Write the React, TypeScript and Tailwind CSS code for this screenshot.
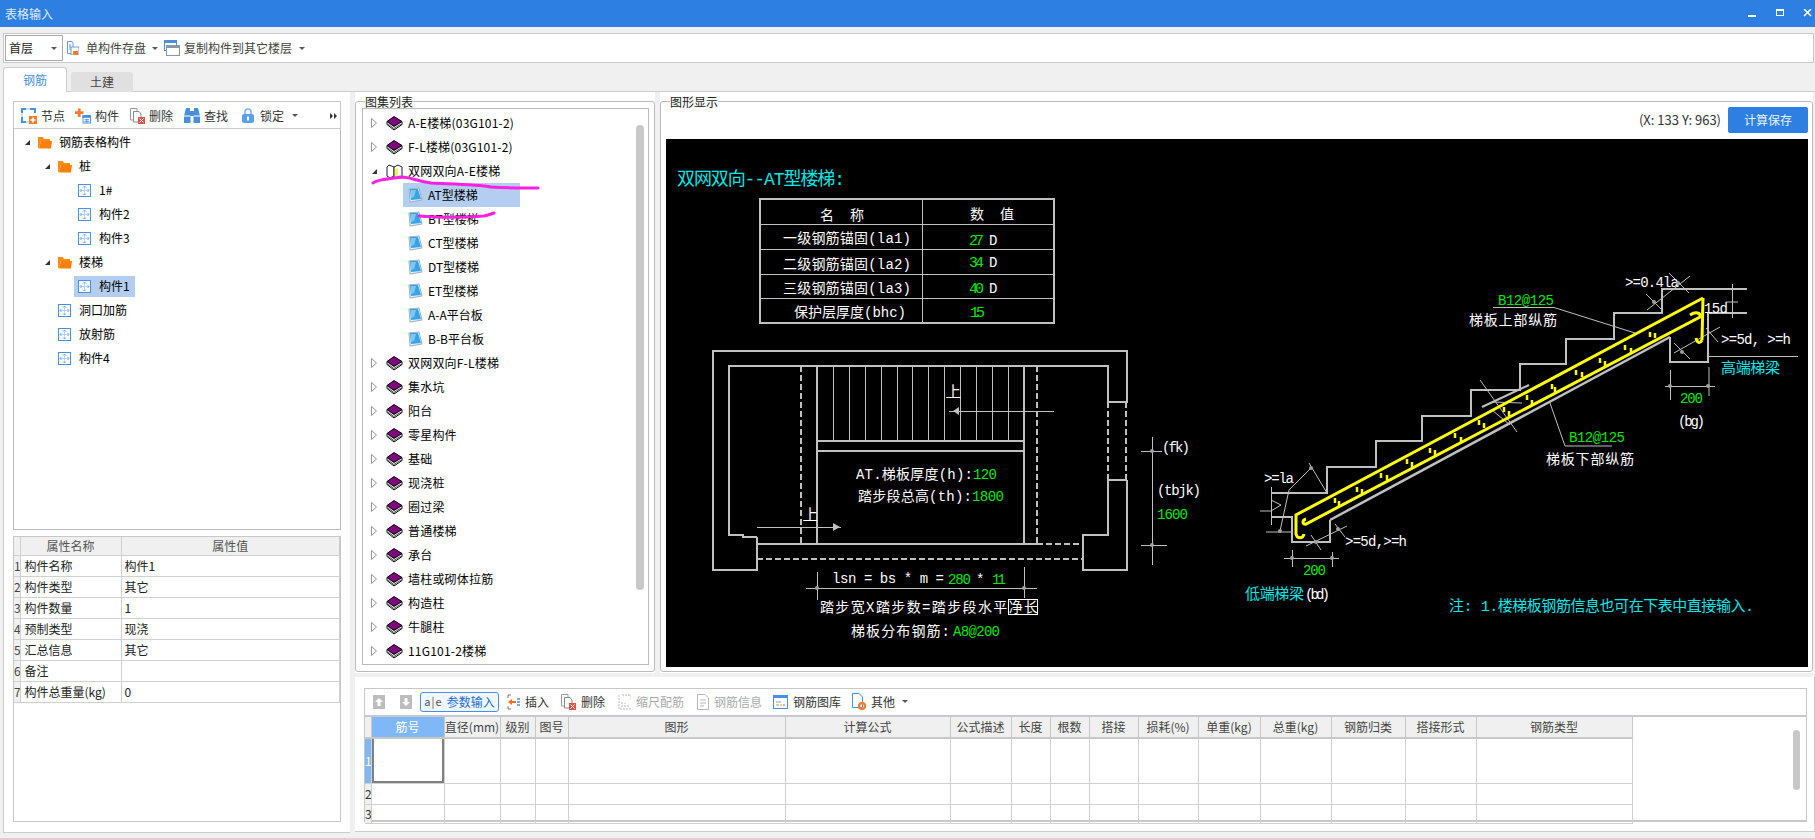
import { type ReactNode } from "react";

const GRAY = "#c0c0c0";

function Caret() {
    return <span className="w-0 h-0 border-x-[3px] border-x-transparent border-t-[3px] border-t-[#555]" />;
}

function BookIcon() {
    return (
        <svg width="17" height="15" viewBox="0 0 17 15" className="shrink-0">
            <path d="M8 0.5 L16 5.5 L8 10.5 L1 5.5 Z" fill="#800080" stroke="#000" />
            <path d="M1 5.5 L1 8.5 L8 14 L16 8.5 L16 5.5 L8 10.5 Z" fill="#fff" stroke="#000" />
            <path d="M2 8 L8 12.5 L15 8" fill="none" stroke="#555" />
        </svg>
    );
}

function OpenBookIcon() {
    return (
        <svg width="17" height="15" viewBox="0 0 17 15" className="shrink-0">
            <path d="M8 3 L3 1 L1 3 L1 12 L4 14 L8 12 Z" fill="#fff" stroke="#222" />
            <path d="M8 3 L12 1 L16 3 L16 14 L8 14 Z" fill="#fff" stroke="#222" />
            <path d="M9 5 L12 4 L12 12 L9 13 Z" fill="#f8f060" />
        </svg>
    );
}

function PageIcon() {
    return (
        <svg width="15" height="16" viewBox="0 0 15 16" className="shrink-0">
            <path d="M1 2 L11 1 L14 13 L2 15 Z" fill="#e4eef4" stroke="#9ab0bc" />
            <path d="M2 2 L10 2 L13 12 L3 13 Z" fill="#38a4e8" />
            <path d="M3 3 L8 3 L6 10 L3 11 Z" fill="#7cc8f4" />
        </svg>
    );
}

function NodeIcon() {
    return (
        <svg width="13" height="13" viewBox="0 0 13 13" className="shrink-0">
            <rect x="0.5" y="0.5" width="12" height="12" fill="#fff" stroke="#4a90e2" />
            <path d="M6.5 2 V11 M2 6.5 H11" fill="none" stroke="#b4d2f4" />
            <path d="M5 3.5 L6.5 2 L8 3.5 M5 9.5 L6.5 11 L8 9.5 M3.5 5 L2 6.5 L3.5 8 M9.5 5 L11 6.5 L9.5 8" fill="none" stroke="#6aa4e8" />
        </svg>
    );
}

function FolderIcon() {
    return (
        <svg width="14" height="13" viewBox="0 0 14 13" className="shrink-0">
            <path d="M0 1 H5 L6 3 H12 V5 H3 L1 12 H0 Z" fill="#ff8c1a" />
            <path d="M3 5 H14 L13 12.5 H1 Z" fill="#ff8000" />
        </svg>
    );
}

function Expanded() {
    return <span className="w-0 h-0 border-l-[5px] border-l-transparent border-b-[5px] border-b-[#333] shrink-0" />;
}

function Collapsed() {
    return (
        <svg width="6" height="10" viewBox="0 0 6 10" className="shrink-0">
            <path d="M0.5 0.5 L5.5 5 L0.5 9.5 Z" fill="#fff" stroke="#999" />
        </svg>
    );
}

function LeftIcon({ kind }: { kind: string }) {
    if (kind === "node")
        return (
            <svg width="16" height="16" viewBox="0 0 16 16">
                <path d="M1 5 V1 H5 M9 1 H14 V5 M1 9 V14 H5" fill="none" stroke="#4a90e2" strokeWidth="2" />
                <path d="M5 1 H9 M1 5 V9 M5 14 H8" stroke="#9cc4f0" />
                <rect x="8" y="8" width="8" height="8" fill="#f08030" />
                <path d="M12 9.5 V14.5 M9.5 12 H14.5" stroke="#fff" strokeWidth="1.5" />
            </svg>
        );
    if (kind === "part")
        return (
            <svg width="17" height="16" viewBox="0 0 17 16">
                <path d="M3 0 H6 V3 H9 V6 H6 V9 H3 V6 H0 V3 H3 Z" fill="#f08030" />
                <rect x="8.5" y="7.5" width="8" height="8" fill="#fff" stroke="#4a90e2" />
                <rect x="8" y="7" width="9" height="3" fill="#4a90e2" />
                <path d="M10 12 H15 M10 14 H15 M12.5 11 V15" stroke="#4a90e2" />
            </svg>
        );
    if (kind === "delete")
        return (
            <svg width="15" height="16" viewBox="0 0 15 16">
                <path d="M0.5 0.5 H7 V12 H0.5 Z" fill="#fff" stroke="#999" />
                <path d="M3.5 3.5 H9 L11 6 V14 H3.5 Z" fill="#fff" stroke="#888" />
                <rect x="8" y="9" width="7" height="7" fill="#d9534f" />
                <path d="M9.5 10.5 L13.5 14.5 M13.5 10.5 L9.5 14.5" stroke="#fff" />
            </svg>
        );
    if (kind === "find")
        return (
            <svg width="16" height="15" viewBox="0 0 16 15">
                <path d="M2 0 H6 V3 H10 V0 H14 L16 8 V15 H9.5 V8 H6.5 V15 H0 V8 Z" fill="#4a90d9" />
                <path d="M0 8 H6.5 M9.5 8 H16" stroke="#fff" />
            </svg>
        );
    return (
        <svg width="12" height="15" viewBox="0 0 12 15">
            <path d="M3 6 V4 A3 3 0 0 1 9 4 V6" fill="none" stroke="#7ab0ea" strokeWidth="1.5" />
            <rect x="0" y="6" width="12" height="9" rx="2" fill="#5a9ee8" />
            <rect x="5" y="8.5" width="2" height="4" fill="#fff" />
        </svg>
    );
}

function SaveIcon() {
    return (
        <svg width="12" height="14" viewBox="0 0 12 14">
            <path d="M0.5 0.5 H5 L6 2 V12.5 H0.5 Z" fill="#fff" stroke="#6a9bd8" />
            <path d="M2 4 H4 M2 6 H4 M2 8 H4" stroke="#6a9bd8" />
            <rect x="4" y="6" width="8" height="8" fill="#fff" stroke="#6a9bd8" />
            <rect x="6" y="10" width="5" height="4" fill="#f08030" />
        </svg>
    );
}

function CopyIcon() {
    return (
        <svg width="16" height="16" viewBox="0 0 16 16">
            <rect x="0.5" y="0.5" width="12" height="10" fill="#fff" stroke="#4a90e2" />
            <rect x="0" y="0" width="13" height="3" fill="#4a90e2" />
            <rect x="2.5" y="5.5" width="13" height="10" fill="#fff" stroke="#8a96a4" />
            <rect x="2" y="5" width="14" height="3" fill="#8a96a4" />
        </svg>
    );
}

function ToolIcon({ kind }: { kind: string }) {
    switch (kind) {
        case "up":
        case "down":
            return (
                <svg width="12" height="14" viewBox="0 0 12 14">
                    <rect width="12" height="14" fill="#bdbdbd" />
                    <path d={kind === "up" ? "M6 3 L10 7 H7.5 V11 H4.5 V7 H2 Z" : "M6 11 L10 7 H7.5 V3 H4.5 V7 H2 Z"} fill="#fff" />
                </svg>
            );
        case "insert":
            return (
                <svg width="13" height="16" viewBox="0 0 13 16">
                    <path d="M4 1 H1 V4 M4 15 H1 V12" fill="none" stroke="#777" />
                    <path d="M1 8 L5 5 V7 H9 V9 H5 V11 Z" fill="#f07020" />
                    <path d="M10 5 H13 M10 8 H13 M10 11 H13" stroke="#4a90e2" strokeWidth="1.5" />
                </svg>
            );
        case "scale":
            return (
                <svg width="13" height="16" viewBox="0 0 13 16">
                    <path d="M1 1 V15 H13 M4 1 H13 M13 1 V5 M4 13 V7 M7 13 V9 M10 13 V11" fill="none" stroke="#b8b8b8" strokeDasharray="2 1" />
                </svg>
            );
        case "info":
            return (
                <svg width="12" height="16" viewBox="0 0 12 16">
                    <path d="M0.5 0.5 H8 L11.5 4 V15.5 H0.5 Z" fill="#fff" stroke="#b8b8b8" />
                    <path d="M3 6 H9 M3 9 H9 M3 12 H7" stroke="#b8b8b8" />
                </svg>
            );
        case "library":
            return (
                <svg width="15" height="14" viewBox="0 0 15 14">
                    <rect x="0.5" y="0.5" width="14" height="13" fill="#fff" stroke="#4a90e2" />
                    <rect width="15" height="3" fill="#4a90e2" />
                    <path d="M3 7 H8 M3 10 H6" stroke="#999" />
                    <path d="M7 10 H9" stroke="#f0a020" />
                    <path d="M10 10 H12" stroke="#d9534f" />
                </svg>
            );
        case "other":
            return (
                <svg width="14" height="17" viewBox="0 0 14 17">
                    <path d="M0.5 0.5 H7 L10.5 4 V14.5 H0.5 Z" fill="#fff" stroke="#4a90e2" />
                    <circle cx="10" cy="13" r="3" fill="none" stroke="#f08030" strokeWidth="2.5" />
                </svg>
            );
        default:
            return <LeftIcon kind="delete" />;
    }
}

function TreeRow({ children, indent }: { children: ReactNode; indent: number }) {
    return (
        <div className="h-6 flex items-center" style={{ paddingLeft: indent }}>
            {children}
        </div>
    );
}

function ComponentTree() {
    return (
        <div className="h-[402px] border border-[#bbb] border-t-[#ccc] pt-[1px] text-[12px] text-black">
            <TreeRow indent={11}>
                <Expanded />
                <span className="ml-[8px] flex items-center gap-[7px]">
                    <FolderIcon /> 钢筋表格构件
                </span>
            </TreeRow>
            <TreeRow indent={31}>
                <Expanded />
                <span className="ml-[8px] flex items-center gap-[7px]">
                    <FolderIcon /> 桩
                </span>
            </TreeRow>
            {["1#", "构件2", "构件3"].map((n) => (
                <TreeRow key={n} indent={64}>
                    <NodeIcon />
                    <span className="ml-[8px]">{n}</span>
                </TreeRow>
            ))}
            <TreeRow indent={31}>
                <Expanded />
                <span className="ml-[8px] flex items-center gap-[7px]">
                    <FolderIcon /> 楼梯
                </span>
            </TreeRow>
            <TreeRow indent={60}>
                <div className="h-[21px] w-[61px] pl-[4px] flex items-center bg-[#b3cef0]">
                    <NodeIcon />
                    <span className="ml-[8px]">构件1</span>
                </div>
            </TreeRow>
            {["洞口加筋", "放射筋", "构件4"].map((n) => (
                <TreeRow key={n} indent={44}>
                    <NodeIcon />
                    <span className="ml-[8px]">{n}</span>
                </TreeRow>
            ))}
        </div>
    );
}

const props = [
    ["构件名称", "构件1"],
    ["构件类型", "其它"],
    ["构件数量", "1"],
    ["预制类型", "现浇"],
    ["汇总信息", "其它"],
    ["备注", ""],
    ["构件总重量(kg)", "0"],
];

function PropsTable() {
    return (
        <div className="mt-[6px] h-[286px] border border-[#c8c8c8] bg-white text-[12px]">
            <table className="w-[326px] table-fixed border-collapse">
                <colgroup>
                    <col className="w-[6px]" />
                    <col className="w-[101px]" />
                    <col />
                </colgroup>
                <thead>
                    <tr className="h-[17px] bg-[#f0f0f0] text-[#555]">
                        <th className="border border-[#d0d0d0] border-t-0 border-l-0 font-normal" />
                        <th className="border border-[#d0d0d0] border-t-0 font-normal">属性名称</th>
                        <th className="border border-[#d0d0d0] border-t-0 border-r-[#c8c8c8] font-normal">属性值</th>
                    </tr>
                </thead>
                <tbody>
                    {props.map(([k, v], i) => (
                        <tr key={k} className="h-[21px] text-[#222]">
                            <td className="border border-[#d0d0d0] border-l-0 bg-[#f0f0f0] text-[#444] overflow-hidden">{i + 1}</td>
                            <td className="border border-[#d0d0d0] pl-[4px] whitespace-nowrap">{k}</td>
                            <td className="border border-[#d0d0d0] pl-[3px]">{v}</td>
                        </tr>
                    ))}
                </tbody>
            </table>
        </div>
    );
}

function LeftPanel() {
    const tools = [
        ["node", "节点", "ml-[7px]"],
        ["part", "构件", "ml-[10px]"],
        ["delete", "删除", "ml-[10px]"],
        ["find", "查找", "ml-[11px]"],
        ["lock", "锁定", "ml-[12px]"],
    ];
    return (
        <div className="w-[347px] shrink-0 bg-white border-l border-[#ccc] pl-[9px] pr-[9px] pt-[9px] border-b">
            <div className="h-[27px] pt-[1px] border border-b-0 border-[#c8c8c8] flex items-center text-[12px] text-[#333]">
                {tools.map(([k, t, m]) => (
                    <div key={t} className={`${m} flex items-center gap-[4px]`}>
                        <span className="w-[16px] flex justify-center">
                            <LeftIcon kind={k} />
                        </span>
                        {t}
                    </div>
                ))}
                <span className="ml-[8px] flex">
                    <Caret />
                </span>
                <svg width="7" height="6" viewBox="0 0 7 6" className="ml-auto mr-[3px]">
                    <path d="M0 0 L3 3 L0 6 Z M4 0 L7 3 L4 6 Z" fill="#333" />
                </svg>
            </div>
            <ComponentTree />
            <PropsTable />
        </div>
    );
}

const atlas: { name: string; open?: boolean; child?: boolean; sel?: boolean }[] = [
    { name: "A-E楼梯(03G101-2)" },
    { name: "F-L楼梯(03G101-2)" },
    { name: "双网双向A-E楼梯", open: true },
    { name: "AT型楼梯", child: true, sel: true },
    { name: "BT型楼梯", child: true },
    { name: "CT型楼梯", child: true },
    { name: "DT型楼梯", child: true },
    { name: "ET型楼梯", child: true },
    { name: "A-A平台板", child: true },
    { name: "B-B平台板", child: true },
    { name: "双网双向F-L楼梯" },
    { name: "集水坑" },
    { name: "阳台" },
    { name: "零星构件" },
    { name: "基础" },
    { name: "现浇桩" },
    { name: "圈过梁" },
    { name: "普通楼梯" },
    { name: "承台" },
    { name: "墙柱或砌体拉筋" },
    { name: "构造柱" },
    { name: "牛腿柱" },
    { name: "11G101-2楼梯" },
];

function AtlasTree() {
    return (
        <div className="relative h-[557px] border border-[#bbb] pt-[2px] text-[12px] text-black">
            {atlas.map((a) =>
                a.child ? (
                    <div key={a.name} className="h-6 pl-[40px] flex items-center">
                        <div className={`h-6 w-[117px] flex items-center pl-[5px] ${a.sel ? "bg-[#b3cef0]" : ""}`}>
                            <PageIcon />
                            <span className="ml-[5px]">{a.name}</span>
                        </div>
                    </div>
                ) : (
                    <div key={a.name} className="h-6 pl-[8px] flex items-center">
                        <span className="w-[6px] flex justify-center">{a.open ? <Expanded /> : <Collapsed />}</span>
                        <span className="ml-[9px]">{a.open ? <OpenBookIcon /> : <BookIcon />}</span>
                        <span className="ml-[5px] tracking-[0.2px]">{a.name}</span>
                    </div>
                ),
            )}
            <div className="absolute left-[273px] top-[16px] w-[8px] h-[465px] rounded-[4px] bg-[#c8c8c8]" />
            {/* marker strokes drawn over the tree */}
            <svg className="absolute left-[-362px] top-[-108px] pointer-events-none" width="700" height="300" viewBox="0 0 700 300">
                <path d="M372 182 C376 178 390 178 400 176 C410 176 415 180 430 182 C450 183 475 183 490 186 C505 187 520 187 537 187" fill="none" stroke="#ff20e0" strokeWidth="3" strokeLinecap="round" />
                <path d="M418 215 C440 217 470 216 483 215 C488 214 490 213 493 212" fill="none" stroke="#ff20e0" strokeWidth="3" strokeLinecap="round" />
            </svg>
        </div>
    );
}

function Group({ title, className, children }: { title: string; className: string; children: ReactNode }) {
    return (
        <div className={`${className} bg-white pt-[9px]`}>
            <div className="relative h-[571px] border border-[#bbb] rounded-[3px]">
                <span className="absolute left-[9px] top-[-9px] bg-white text-[12px] leading-[17px] text-[#222]">{title}</span>
                {children}
            </div>
        </div>
    );
}

function T({ x, y, w, s = 14, c = "#fff", children }: { x: number; y: number; w?: number; s?: number; c?: string; children: string }) {
    return (
        <text x={x} y={y} fontSize={s} fill={c} textLength={w} lengthAdjust={w ? "spacing" : undefined}>
            {children}
        </text>
    );
}

const G = "#00e800";
const C = "#00e8e8";
const Y = "#ffff00";

const treads = [833, 849, 865, 881, 897, 912, 928, 944, 960, 976, 992, 1008];
const upperTicks = [[1335, 498], [1357, 487], [1381, 473], [1407, 459], [1430, 448], [1455, 433], [1479, 420], [1504, 407], [1527, 395], [1552, 384], [1576, 370], [1600, 358], [1625, 345], [1650, 332]];
const lowerTicks = [[1339, 506], [1362, 494], [1387, 480], [1412, 467], [1435, 455], [1461, 442], [1484, 428], [1509, 416], [1532, 405], [1555, 392], [1582, 377], [1605, 366], [1631, 353], [1655, 338]];
const dots = [[1152, 451], [1152, 545], [817, 588], [1024, 588], [1654, 302], [1678, 283], [1682, 352], [1670, 386], [1708, 386], [1311, 468], [1280, 531], [1316, 542], [1338, 529], [1292, 558], [1332, 558]];

function Plan() {
    return (
        <>
            <g fill="none" stroke={GRAY} strokeWidth="2" shapeRendering="crispEdges">
                <path d="M757 537 V570 H713 V351 H1127 V402 H1108 V366 H729 V535 H743 V537 H757" />
                <path d="M1127 480 H1108 V535 H1083 V570 H1127 V480" />
                <path d="M817 366 V544 M1024 366 V544 M757 544 H1037 M817 441 H1024 M817 451 H1024" />
                <path d="M801 366 V544 M1037 366 V544 M1037 544 H1083 M757 559 H1083 M1108 402 V480 M1126 402 V480" strokeDasharray="6 3" />
            </g>
            <g stroke={GRAY} shapeRendering="crispEdges" fill="none">
                {treads.map((x) => (
                    <path key={x} d={`M${x + 0.5} 366 V441`} />
                ))}
                <path d="M949 411.5 H1054 M757 527.5 H841 M946 397.5 H960 M803 520.5 H817" />
                <path d="M1152.5 437 V565 M1141 451.5 H1162 M1141 545.5 H1167 M806 588.5 H1037 M817.5 572 V600 M1024.5 567 V598" />
            </g>
            <path d="M953 411 L959 407 V415 Z M840 527 L833 523 V531 Z" fill={GRAY} />
            <g>
                <T x={946} y={397} s={15}>上</T>
                <T x={803} y={520} s={15}>上</T>
                <T x={856} y={479} w={117}>AT.梯板厚度(h):</T>
                <T x={973} y={479} w={24} c={G}>120</T>
                <T x={858} y={501} w={114}>踏步段总高(th):</T>
                <T x={972} y={501} w={32} c={G}>1800</T>
                <T x={1162} y={452} w={28}>(fk)</T>
                <T x={1157} y={495} w={44}>(tbjk)</T>
                <T x={1157} y={519} w={31} c={G}>1600</T>
                <T x={832} y={583} w={112}>lsn = bs * m =</T>
                <T x={948} y={584} w={23} c={G}>280</T>
                <T x={976} y={584} w={8}>*</T>
                <T x={992} y={584} w={14} c={G}>11</T>
                <T x={820} y={612} w={218}>踏步宽X踏步数=踏步段水平净长</T>
                <rect x={1008.5} y={599.5} width={29} height={15} fill="none" stroke="#fff" shapeRendering="crispEdges" />
                <T x={851} y={636} w={99}>梯板分布钢筋:</T>
                <T x={953} y={636} w={47} c={G}>A8@200</T>
            </g>
        </>
    );
}

function Section() {
    return (
        <>
            <g fill="none" stroke={GRAY} strokeWidth="2" shapeRendering="crispEdges">
                <path d="M1271 493 H1327 V467 H1376 V441 H1422 V416 H1471 V390 H1520 V364 H1566 V339 H1614 V313 H1662 V289 H1747" />
                <path d="M1708 313 H1747 M1708 313 V362 H1670 V337 M1330 520 V542 H1292 V517 H1271" />
            </g>
            <path d="M1670 337 L1330 520" stroke={GRAY} strokeWidth="2.5" fill="none" />
            <g fill="none" stroke={GRAY} strokeWidth="1">
                <path d="M1708 356.5 H1798 M1670.5 370 V400 M1709 367 V396 M1665 386.5 H1715" />
                <path d="M1493 307.5 H1554 L1635 333 M1550 403 L1565 446 H1612" />
                <path d="M1647 310 L1690 276 M1646 294 L1662 310 M1669 273 L1689 293 M1732.5 284 V318 M1726 302 H1738" />
                <path d="M1720 327 L1674 353 M1706 328 L1718 342 M1674 343 L1690 359" />
                <path d="M1271.5 487 V525 M1260 511 H1271 M1271 500 L1281 505 L1271 511" />
                <path d="M1311 468 L1289 490 L1280 531 M1309 463 L1327 493 M1266 532 H1291" />
                <path d="M1306 546 L1347 526 M1311 535 L1321 550 M1335 524 L1345 537" />
                <path d="M1284 558.5 H1339 M1292.5 550 V567 M1332.5 552 V567" />
                <path d="M1480 380 L1517 432 M1492 402 L1522 403 M1492 410 L1510 425" />
            </g>
            <path d="M1482 407 L1529 385" stroke={GRAY} strokeWidth="2" fill="none" />
            <g fill="none" stroke={Y} strokeWidth="3">
                <path d="M1702 340 C1700 344 1697 343 1696 338 M1703 298 L1702 340" />
                <path d="M1703 298 L1296 515 L1296 534 C1297 539 1303 539 1304 534" />
                <path d="M1690 315 C1696 311 1701 313 1700 317 L1306 524 C1302 525 1302 520 1306 519" />
            </g>
            <g fill="none" stroke={Y} strokeWidth="2.5">
                {upperTicks.map(([x, y]) => (
                    <path key={x} d={`M${x} ${y} V${y + 5}`} />
                ))}
                {lowerTicks.map(([x, y]) => (
                    <path key={x} d={`M${x} ${y - 5} V${y}`} />
                ))}
            </g>
            <T x={1498} y={305} w={56} c={G}>B12@125</T>
            <T x={1469} y={325} w={88}>梯板上部纵筋</T>
            <T x={1625} y={287} w={54}>&gt;=0.4la</T>
            <T x={1704} y={313} w={24}>15d</T>
            <T x={1721} y={344} w={70}>&gt;=5d, &gt;=h</T>
            <T x={1721} y={373} w={59} s={15} c={C}>高端梯梁</T>
            <T x={1680} y={403} w={23} c={G}>200</T>
            <T x={1678} y={426} w={27}>(bg)</T>
            <T x={1569} y={442} w={56} c={G}>B12@125</T>
            <T x={1546} y={464} w={88}>梯板下部纵筋</T>
            <T x={1264} y={483} w={30}>&gt;=la</T>
            <T x={1345} y={546} w={62}>&gt;=5d,&gt;=h</T>
            <T x={1303} y={575} w={23} c={G}>200</T>
            <T x={1245} y={599} w={59} s={15} c={C}>低端梯梁</T>
            <T x={1305} y={599} w={25}>(bd)</T>
            <T x={1449} y={611} w={305} s={15} c={C}>注: 1.楼梯板钢筋信息也可在下表中直接输入.</T>
        </>
    );
}

function Drawing() {
    return (
        <svg width="1142" height="528" viewBox="666 139 1142 528" className="block bg-black font-['Liberation_Mono','Noto_Sans_CJK_SC',monospace]">
            <T x={677} y={185} w={168} s={18} c={C}>双网双向--AT型楼梯:</T>
            <g shapeRendering="crispEdges" fill="none" stroke={GRAY}>
                <rect x={760} y={199} width={294} height={124} strokeWidth="2" />
                <path d="M922 199 V323 M760 224.5 H1054 M760 249.5 H1054 M760 274.5 H1054 M760 298.5 H1054" />
            </g>
            <T x={820} y={220} w={44}>名 称</T>
            <T x={970} y={219} w={44}>数 值</T>
            <T x={783} y={243} w={128}>一级钢筋锚固(la1)</T>
            <T x={783} y={269} w={128}>二级钢筋锚固(la2)</T>
            <T x={783} y={293} w={128}>三级钢筋锚固(la3)</T>
            <T x={794} y={317} w={112}>保护层厚度(bhc)</T>
            <T x={969} y={245} w={15} s={15} c={G}>27</T>
            <T x={969} y={267} w={15} s={15} c={G}>34</T>
            <T x={969} y={293} w={15} s={15} c={G}>40</T>
            <T x={970} y={317} w={15} s={15} c={G}>15</T>
            <T x={989} y={245}>D</T>
            <T x={989} y={267}>D</T>
            <T x={989} y={293}>D</T>
            <Plan />
            <Section />
            {dots.map(([x, y]) => (
                <circle key={`${x}-${y}`} cx={x} cy={y} r="2" fill="#a0a0a0" />
            ))}
        </svg>
    );
}

const columns = [
    ["筋号", 73],
    ["直径(mm)", 56],
    ["级别", 35],
    ["图号", 33],
    ["图形", 217],
    ["计算公式", 165],
    ["公式描述", 61],
    ["长度", 39],
    ["根数", 39],
    ["搭接", 49],
    ["损耗(%)", 60],
    ["单重(kg)", 62],
    ["总重(kg)", 71],
    ["钢筋归类", 74],
    ["搭接形式", 71],
    ["钢筋类型", 156],
] as const;

function BarGrid() {
    return (
        <table className="w-[1267px] table-fixed border-collapse text-[12px]">
            <colgroup>
                <col style={{ width: 6 }} />
                {columns.map(([n, w]) => (
                    <col key={n} style={{ width: w }} />
                ))}
            </colgroup>
            <thead>
                <tr className="h-[21px] bg-[#f0f0f0] text-[#444]">
                    <th className="border-r border-b-2 border-[#c8c8c8] font-normal" />
                    {columns.map(([n], i) => (
                        <th
                            key={n}
                            className={`border-r border-b-2 border-[#c8c8c8] font-normal whitespace-nowrap overflow-hidden ${i === 0 ? "bg-[#7fb8f8] text-white" : ""}`}>
                            {n}
                        </th>
                    ))}
                </tr>
            </thead>
            <tbody>
                {[45, 21, 18].map((h, r) => (
                    <tr key={r} style={{ height: h }} className="text-[#333]">
                        <td className={`border-b border-r border-[#d0d0d0] overflow-hidden ${r === 0 ? "bg-[#7fb8f8] text-white" : "bg-[#f0f0f0]"}`}>
                            {r + 1}
                        </td>
                        {columns.map(([n], i) => (
                            <td
                                key={n}
                                className={`border-b border-r border-[#d0d0d0] ${r === 0 && i === 0 ? "shadow-[inset_2px_0_0_#808080,inset_-2px_0_0_#808080,inset_0_-2px_0_#808080]" : ""}`}
                            />
                        ))}
                    </tr>
                ))}
            </tbody>
        </table>
    );
}

function BottomPanel() {
    const tools: [string, string, string, string][] = [
        ["insert", "插入", "ml-[8px]", "text-[#333]"],
        ["delete", "删除", "ml-[12px]", "text-[#333]"],
        ["scale", "缩尺配筋", "ml-[13px]", "text-[#aaa]"],
        ["info", "钢筋信息", "ml-[13px]", "text-[#aaa]"],
        ["library", "钢筋图库", "ml-[11px]", "text-[#333]"],
        ["other", "其他", "ml-[11px]", "text-[#333]"],
    ];
    return (
        <div className="ml-[5px] mt-[4px] h-[155px] bg-white border-b border-r border-[#ccc] pt-[11px] pl-[9px] pr-[7px]">
            <div className="relative h-[134px] border border-[#c8c8c8] border-b-2">
                <div className="h-[28px] pb-[1px] border-b-2 border-[#c8c8d0] flex items-center text-[12px]">
                    <span className="ml-[2px] w-[24px] flex justify-center">
                        <ToolIcon kind="up" />
                    </span>
                    <span className="ml-[3px] w-[24px] flex justify-center">
                        <ToolIcon kind="down" />
                    </span>
                    <div className="ml-[2px] w-[79px] h-[20px] border border-[#4a90e2] rounded-[3px] bg-[#f0f7ff] flex items-center justify-center gap-[4px] text-[#1c6fd0]">
                        <span className="text-[#555] text-[11px] tracking-[1px]">a|e</span>
                        参数输入
                    </div>
                    {tools.map(([k, t, m, c]) => (
                        <div key={t} className={`${m} ${c} flex items-center gap-[5px]`}>
                            <ToolIcon kind={k} />
                            {t}
                        </div>
                    ))}
                    <span className="ml-[7px] flex">
                        <Caret />
                    </span>
                </div>
                <BarGrid />
                <div className="absolute left-[1428px] top-[41px] w-[7px] h-[60px] rounded-[4px] bg-[#c8c8c8]" />
            </div>
        </div>
    );
}

export default function App() {
    return (
        <div className="w-[1815px] h-[839px] overflow-hidden bg-[#f0f0f0] border-b border-[#d0d4e4] font-['Noto_Sans_CJK_SC',sans-serif]">
            <header className="h-[27px] bg-[#2d7fe2] flex items-center pl-[5px] pr-[3px] text-white/85 text-[12px]">
                <span>表格输入</span>
                <svg width="64" height="10" viewBox="0 0 64 10" className="ml-auto">
                    <rect x="0" y="6" width="8" height="2" fill="#fff" />
                    <rect x="28.5" y="0.5" width="7" height="6" fill="none" stroke="#fff" />
                    <rect x="28" y="0" width="8" height="2" fill="#fff" />
                    <path d="M56 0 L63 7 M63 0 L56 7" stroke="#fff" strokeWidth="1.6" />
                </svg>
            </header>
            <div className="mt-[6px] ml-[3px] mr-[1px] h-[30px] bg-white border border-[#c8c8c8] flex items-center text-[12px] text-[#444]">
                <div className="ml-[1px] w-[58px] h-[26px] border border-[#aaa] flex items-center justify-between pl-[3px] pr-[5px] text-[#222]">
                    首层
                    <Caret />
                </div>
                <span className="ml-[4px]">
                    <SaveIcon />
                </span>
                <span className="ml-[7px]">单构件存盘</span>
                <span className="ml-[6px] flex">
                    <Caret />
                </span>
                <span className="ml-[6px] flex">
                    <CopyIcon />
                </span>
                <span className="ml-[4px]">复制构件到其它楼层</span>
                <span className="ml-[7px] flex">
                    <Caret />
                </span>
            </div>
            <div className="mt-[4px] ml-[3px] h-[25px] flex items-end text-[12px] relative z-10">
                <div className="w-[64px] h-[25px] bg-white border border-b-0 border-[#ccc] rounded-t-[3px] flex items-center justify-center text-[#4a90e2]">
                    钢筋
                </div>
                <div className="ml-[4px] w-[62px] h-[20px] bg-[#e0e0e0] rounded-t-[3px] flex items-center justify-center text-[#444]">
                    土建
                </div>
            </div>
            <main className="h-[742px] ml-[3px] border-t border-[#ccc] flex -mt-[1px]">
                <LeftPanel />
                <div className="flex-1 min-w-0">
                    <div className="flex h-[581px]">
                        <Group title="图集列表" className="ml-[5px] w-[300px] h-[581px]">
                            <div className="pl-[6px] pt-[6px]">
                                <div className="w-[287px]">
                                    <AtlasTree />
                                </div>
                            </div>
                        </Group>
                        <Group title="图形显示" className="ml-[5px] w-[1153px] h-[581px]">
                            <div className="h-[37px] pt-[5px] flex justify-end items-start pr-[4px] text-[#333]">
                                <span className="mr-[7px] mt-[4px] text-[13px] leading-[18px]">(X: 133 Y: 963)</span>
                                <div className="w-[80px] h-[26px] rounded-[2px] bg-[#2d7fe2] text-[12px] text-white/90 flex items-center justify-center">计算保存</div>
                            </div>
                            <div className="pl-[5px]">
                                <Drawing />
                            </div>
                        </Group>
                    </div>
                    <BottomPanel />
                </div>
            </main>
        </div>
    );
}
